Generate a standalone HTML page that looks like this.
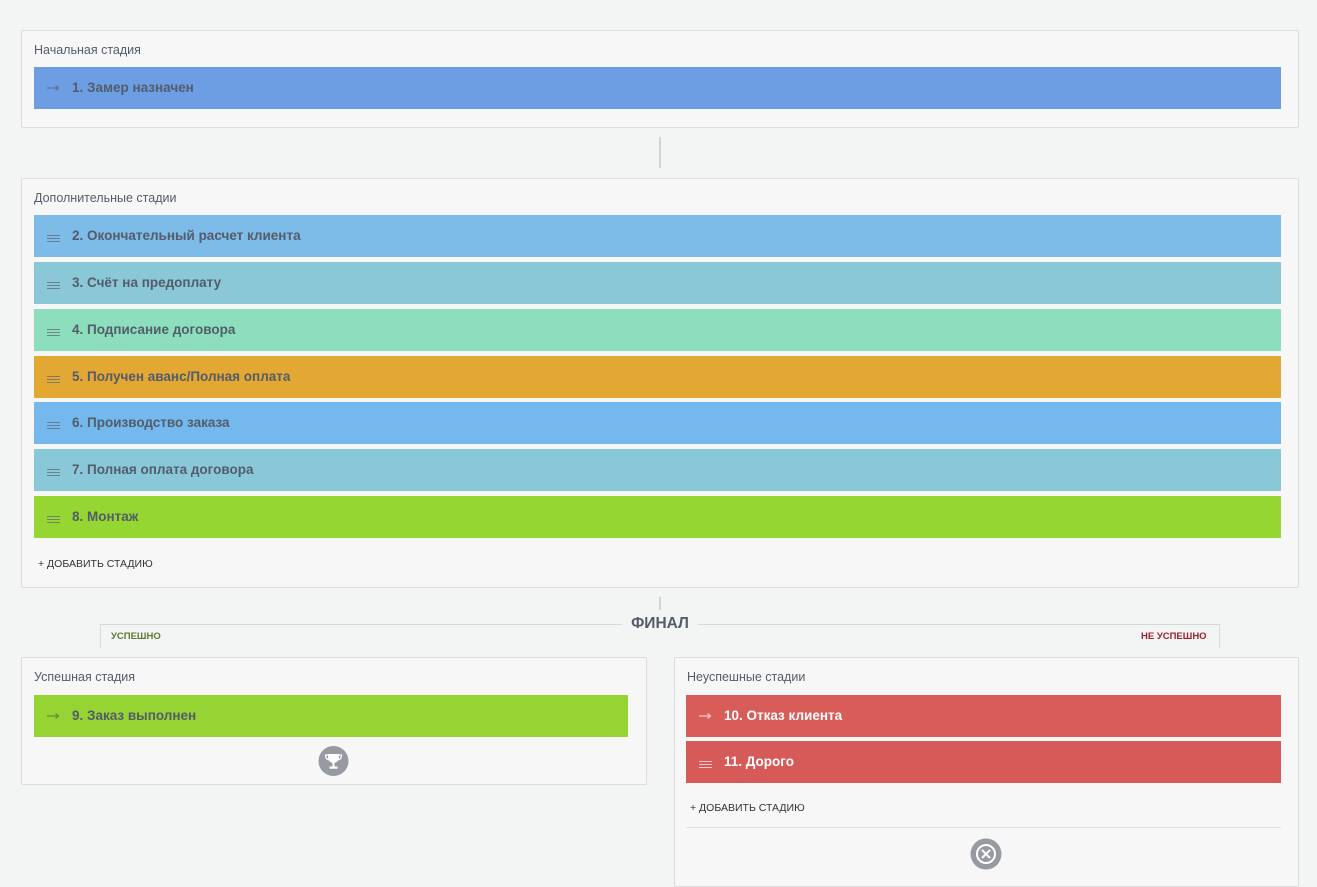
<!DOCTYPE html>
<html><head><meta charset="utf-8">
<style>
*{box-sizing:border-box;margin:0;padding:0}
body{width:1317px;height:869px;overflow:hidden;background:#f3f4f4;font-family:"Liberation Sans",Arial,sans-serif;position:relative}
.box{position:absolute;background:#f7f7f7;border:1px solid #dcdcdc;border-radius:2px}
.ttl{position:absolute;left:12px;font-size:12.5px;color:#545c6a}
.row{position:absolute;height:42px;font-size:13.5px;font-weight:bold;color:#535c69;line-height:42px;padding-left:38px}
.row.w{color:#fff}
.ic{position:absolute;left:13px;top:0;width:13px;height:42px}
.burger i{position:absolute;left:0;width:13px;height:1px;background:#5f6a76;opacity:.75}
.row.w .burger i{background:#fff;opacity:.65}
.arr{position:absolute;left:13px;top:17px}
.add{position:absolute;font-size:10.5px;color:#333}
</style></head><body>

<div class="box" style="left:21px;top:30px;width:1278px;height:98px">
 <div class="ttl" style="top:12px">Начальная стадия</div>
</div>
<div class="row" style="left:34px;top:67px;width:1247px;background:#6d9ee4"><svg class="arr" width="13" height="8" viewBox="0 0 13 8"><path d="M0 4h11M8.5 1.5L11.5 4 8.5 6.5" fill="none" stroke="#5f6a78" stroke-width="1.3" opacity=".8"/></svg>1. Замер назначен</div>

<div style="position:absolute;left:659px;top:137px;width:2px;height:31px;background:#d3d3d3"></div>

<div class="box" style="left:21px;top:178px;width:1278px;height:410px">
 <div class="ttl" style="top:12px">Дополнительные стадии</div>
 <div class="add" style="left:16px;top:379px">+ ДОБАВИТЬ СТАДИЮ</div>
</div>

<div class="row" style="left:34px;top:215px;width:1247px;background:#7dbbe9"><span class="ic burger"><i style="top:20px"></i><i style="top:23px"></i><i style="top:26px"></i></span>2. Окончательный расчет клиента</div>
<div class="row" style="left:34px;top:262px;width:1247px;background:#8ac7d7"><span class="ic burger"><i style="top:20px"></i><i style="top:23px"></i><i style="top:26px"></i></span>3. Счёт на предоплату</div>
<div class="row" style="left:34px;top:309px;width:1247px;background:#8ddebc"><span class="ic burger"><i style="top:20px"></i><i style="top:23px"></i><i style="top:26px"></i></span>4. Подписание договора</div>
<div class="row" style="left:34px;top:356px;width:1247px;background:#e2a833"><span class="ic burger"><i style="top:20px"></i><i style="top:23px"></i><i style="top:26px"></i></span>5. Получен аванс/Полная оплата</div>
<div class="row" style="left:34px;top:402px;width:1247px;background:#74b8ee"><span class="ic burger"><i style="top:20px"></i><i style="top:23px"></i><i style="top:26px"></i></span>6. Производство заказа</div>
<div class="row" style="left:34px;top:449px;width:1247px;background:#89c8d9"><span class="ic burger"><i style="top:20px"></i><i style="top:23px"></i><i style="top:26px"></i></span>7. Полная оплата договора</div>
<div class="row" style="left:34px;top:496px;width:1247px;background:#95d632"><span class="ic burger"><i style="top:20px"></i><i style="top:23px"></i><i style="top:26px"></i></span>8. Монтаж</div>

<div style="position:absolute;left:659px;top:597px;width:2px;height:13px;background:#d3d3d3"></div>

<div style="position:absolute;left:100px;top:624px;width:1120px;height:24px;border-top:1px solid #d8d8d8;border-left:1px solid #d8d8d8;border-right:1px solid #d8d8d8"></div>
<div style="position:absolute;left:622px;top:614px;width:76px;height:20px;background:#f3f4f4;text-align:center;font-size:15.5px;font-weight:bold;color:#535c69;line-height:20px">ФИНАЛ</div>
<div style="position:absolute;left:111px;top:631px;font-size:9.5px;font-weight:bold;color:#5b7a2e">УСПЕШНО</div>
<div style="position:absolute;left:1141px;top:631px;font-size:9.5px;font-weight:bold;color:#9b2333">НЕ УСПЕШНО</div>

<div class="box" style="left:21px;top:657px;width:626px;height:128px">
 <div class="ttl" style="top:12px">Успешная стадия</div>
</div>
<div class="row" style="left:34px;top:695px;width:594px;background:#95d432"><svg class="arr" width="13" height="8" viewBox="0 0 13 8"><path d="M0 4h11M8.5 1.5L11.5 4 8.5 6.5" fill="none" stroke="#5f7a3a" stroke-width="1.3" opacity=".8"/></svg>9. Заказ выполнен</div>
<svg style="position:absolute;left:318px;top:746px" width="31" height="30" viewBox="0 0 31 30">
 <circle cx="15.5" cy="15" r="15" fill="#979ba1"/>
 <path d="M10 8h11v3c0 3.5-2.5 6-5.5 6S10 14.5 10 11z" fill="#fff"/>
 <path d="M10 9H7.5c0 3 1.5 4.5 3.5 4.8M21 9h2.5c0 3-1.5 4.5-3.5 4.8" fill="none" stroke="#fff" stroke-width="1.3"/>
 <rect x="14.5" y="16.5" width="2" height="4" fill="#fff"/>
 <rect x="11.5" y="20.5" width="8" height="2.2" fill="#fff"/>
</svg>

<div class="box" style="left:674px;top:657px;width:625px;height:230px">
 <div class="ttl" style="top:12px">Неуспешные стадии</div>
 <div class="add" style="left:15px;top:144px">+ ДОБАВИТЬ СТАДИЮ</div>
 <div style="position:absolute;left:11px;top:169px;width:595px;height:1px;background:#e0e0e0"></div>
</div>
<div class="row w" style="left:686px;top:695px;width:595px;background:#d85c58"><svg class="arr" width="13" height="8" viewBox="0 0 13 8"><path d="M0 4h11M8.5 1.5L11.5 4 8.5 6.5" fill="none" stroke="#f4c4c2" stroke-width="1.3"/></svg>10. Отказ клиента</div>
<div class="row w" style="left:686px;top:741px;width:595px;background:#d65a57"><span class="ic burger"><i style="top:20px"></i><i style="top:23px"></i><i style="top:26px"></i></span>11. Дорого</div>
<svg style="position:absolute;left:970px;top:838px" width="32" height="32" viewBox="0 0 32 32">
 <circle cx="16" cy="16" r="15.5" fill="#979ba1"/>
 <circle cx="16" cy="16" r="9" fill="none" stroke="#fff" stroke-width="2"/>
 <path d="M12 12l8 8M20 12l-8 8" stroke="#fff" stroke-width="2"/>
</svg>

</body></html>
